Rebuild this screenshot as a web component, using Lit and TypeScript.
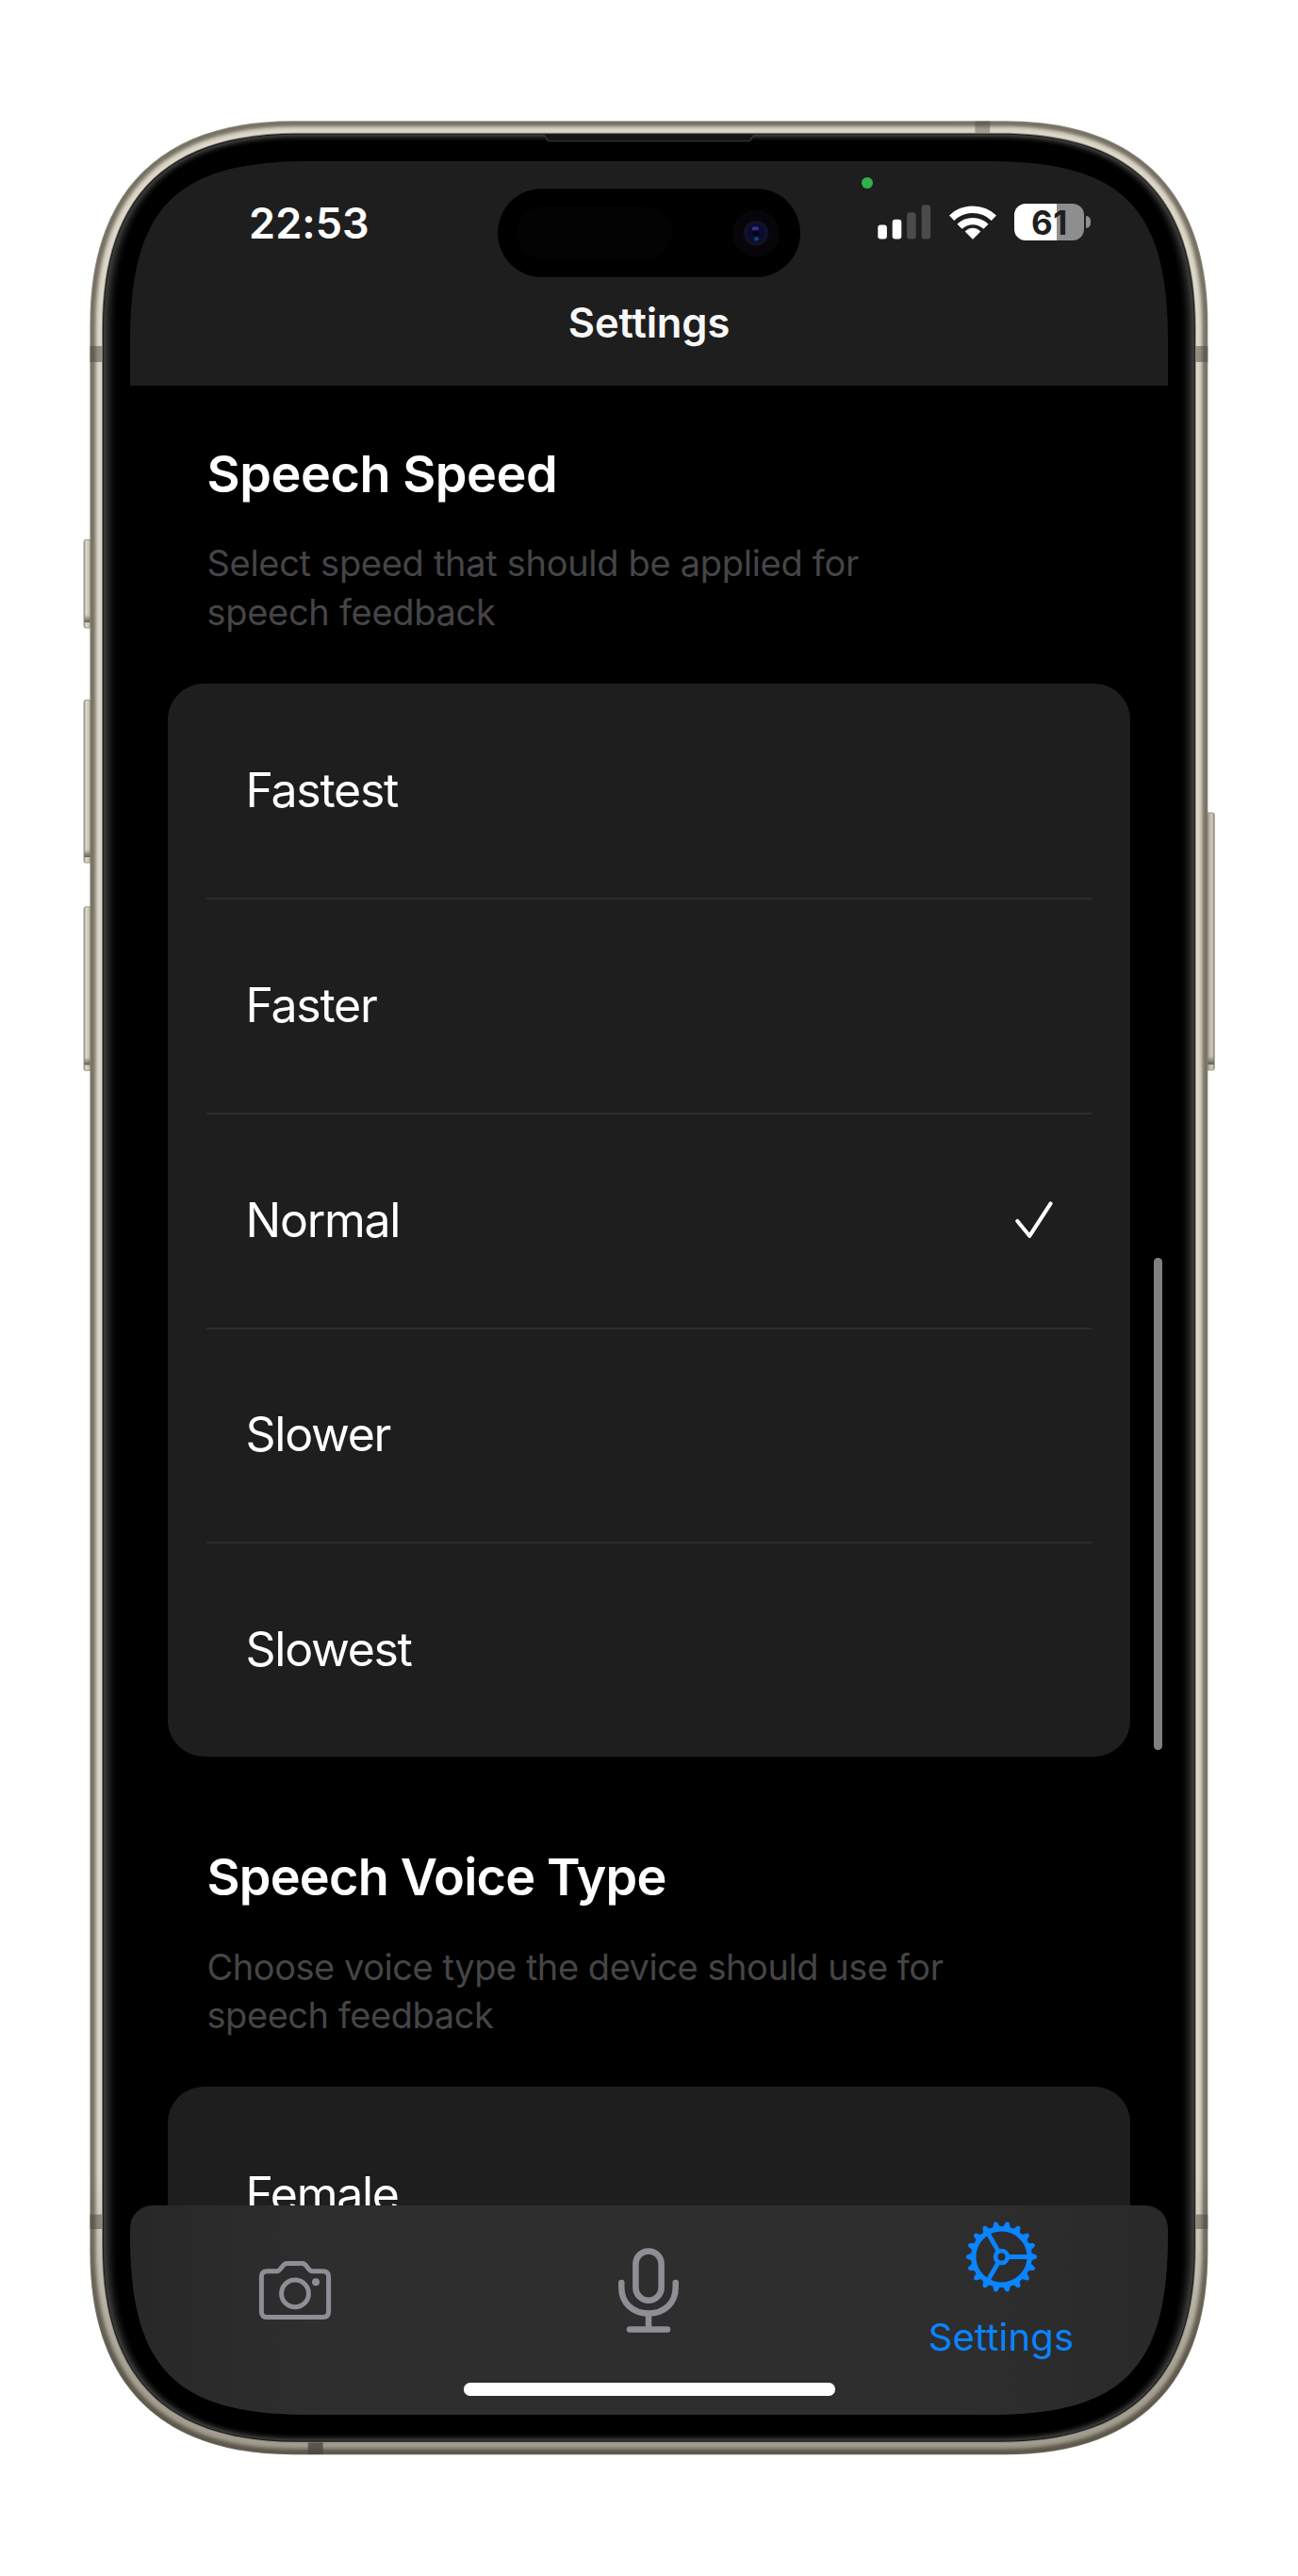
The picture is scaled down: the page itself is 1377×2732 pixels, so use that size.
import { LitElement, html, svg, css, unsafeCSS } from "lit";
import { classMap } from "lit/directives/class-map.js";

/* Continuous-corner rectangle: `e` is how far the corner reaches along each edge, `mid` its inset on the diagonal. */
function squircle(x: number, y: number, w: number, h: number, e: number, mid: number): string {
  const a = (8 * mid - e) / 3;
  const r = x + w;
  const b = y + h;
  return (
    `M${x + e} ${y}H${r - e}C${r - a} ${y} ${r} ${y + a} ${r} ${y + e}` +
    `V${b - e}C${r} ${b - a} ${r - a} ${b} ${r - e} ${b}` +
    `H${x + e}C${x + a} ${b} ${x} ${b - a} ${x} ${b - e}` +
    `V${y + e}C${x} ${y + a} ${x + a} ${y} ${x + e} ${y}Z`
  );
}

const BODY = { x: 95.4, y: 128.2, w: 1186, h: 2475 };

/* The edge glow of the glass is wider on the long sides than on the top and bottom. */
function bodyAt(inset: number): string {
  const v = inset > 15 ? 15 + (inset - 15) * 0.5 : inset;
  return squircle(
    BODY.x + inset,
    BODY.y + v,
    BODY.w - inset * 2,
    BODY.h - v * 2,
    215 - inset * 0.58,
    55 - inset * 0.293
  );
}

/* [inset, colour] from the outer rim to the glass */
const METAL: Array<[number, string]> = [
  [0, "#8d887a"],
  [1, "#757063"],
  [2.5, "#7b7668"],
  [4, "#8c8678"],
  [5.2, "#a39d8e"],
  [6.4, "#bdb7a8"],
  [7.6, "#d0cabc"],
  [9, "#dad5c7"],
  [11, "#ded9cc"],
];
const GLASS: Array<[number, string]> = [
  [12.6, "#8f8878"],
  [13.5, "#1b1a18"],
  [14.6, "#3b3b3b"],
  [16, "#343434"],
  [17.4, "#2b2b2b"],
  [18.8, "#222222"],
  [20.2, "#1a1a1a"],
  [21.8, "#121212"],
  [23.4, "#0b0b0b"],
  [25.2, "#050505"],
  [27.5, "#000000"],
];

const SCREEN_CLIP = squircle(0, 0, 1101, 2390, 190, 42);

const LEFT_KEYS = [
  { y: 572.4, h: 93.6 },
  { y: 742.4, h: 172.6 },
  { y: 961.8, h: 173.6 },
];

class DeviceFrame extends LitElement {
  static styles = css`
    :host {
      display: block;
    }
    .art {
      display: block;
      width: 1377px;
      height: 2732px;
    }
  `;

  render() {
    return html`
      <svg class="art" viewBox="0 0 1377 2732" aria-hidden="true">
        <defs>
          <linearGradient id="key" x1="0" x2="1" y1="0" y2="0">
            <stop offset="0" stop-color="#9a9587" />
            <stop offset="0.25" stop-color="#ddd8cb" />
            <stop offset="0.6" stop-color="#c8c2b4" />
            <stop offset="1" stop-color="#77725f" />
          </linearGradient>
          <linearGradient id="keyR" x1="1" x2="0" y1="0" y2="0">
            <stop offset="0" stop-color="#8a8577" />
            <stop offset="0.25" stop-color="#d2cdc0" />
            <stop offset="0.6" stop-color="#b7b1a3" />
            <stop offset="1" stop-color="#6d685a" />
          </linearGradient>
          <linearGradient id="shade" x1="0" x2="0" y1="0" y2="1">
            <stop offset="0.88" stop-color="#2c261a" stop-opacity="0" />
            <stop offset="0.96" stop-color="#2c261a" stop-opacity="0.3" />
            <stop offset="1" stop-color="#2c261a" stop-opacity="0.34" />
          </linearGradient>
          <linearGradient id="keyEnd" x1="0" x2="0" y1="0" y2="1">
            <stop offset="0" stop-color="#625d50" stop-opacity="0" />
            <stop offset="1" stop-color="#625d50" />
          </linearGradient>
        </defs>
        ${LEFT_KEYS.map(
          (k) => svg`
            <rect x="89" y=${k.y} width="9" height=${k.h} rx="2" fill="url(#key)" stroke="#8d887a" stroke-width="0.8" />
            <rect x="89.6" y=${k.y + k.h - 14} width="7" height="8" fill="url(#keyEnd)" />`
        )}
        <rect x="1279" y="862" width="9.3" height="273" rx="2" fill="url(#keyR)" stroke="#8d887a" stroke-width="0.8" />
        <rect x="1281" y="1120" width="6.8" height="9" fill="url(#keyEnd)" />
        ${METAL.map(([i, c]) => svg`<path d=${bodyAt(i)} fill=${c} />`)}
        <path d=${bodyAt(0)} fill="url(#shade)" />
        <g fill="#4c4341" fill-opacity="0.5">
          <rect x="95.4" y="367" width="14" height="17" />
          <rect x="1267.4" y="367" width="14" height="17" />
          <rect x="95.4" y="2348.6" width="14" height="15.4" />
          <rect x="1267.4" y="2348.6" width="14" height="15.4" />
          <rect x="1034.4" y="128.4" width="15.8" height="14" fill-opacity="0.4" />
          <rect x="326.8" y="2590" width="15.8" height="13" fill-opacity="0.8" />
        </g>
        ${GLASS.map(([i, c]) => svg`<path d=${bodyAt(i)} fill=${c} />`)}
        <path d="M577 142.6H800L796.5 148.6Q795.6 150 793.5 150H583.5Q581.4 150 580.5 148.6Z" fill="#161616" />
        <path d="M577.5 143.2L580.8 148.6Q581.6 149.8 583.5 149.8H793.5Q795.4 149.8 796.2 148.6L799.5 143.2" fill="none" stroke="#3a3a3a" stroke-width="1.1" />
      </svg>
    `;
  }
}
customElements.define("device-frame", DeviceFrame);

class StatusBar extends LitElement {
  static styles = css`
    :host {
      display: block;
    }
    .row {
      display: flex;
      justify-content: space-between;
      align-items: center;
      height: 129px;
      padding: 0 82px 0 126px;
    }
    .time {
      padding-top: 3px;
      font-size: 45px;
      line-height: 54px;
      font-weight: 600;
      letter-spacing: 0.1px;
      color: #fff;
    }
    .icons {
      display: flex;
      align-items: center;
      gap: 19px;
    }
    .icon {
      display: block;
    }
    .battery {
      display: flex;
      align-items: center;
      gap: 2px;
    }
    .cell {
      display: flex;
      justify-content: center;
      align-items: center;
      width: 74px;
      height: 39px;
      border-radius: 12px;
      background: linear-gradient(90deg, #fff 61%, #8e8e8e 61%);
      font-size: 35px;
      line-height: 40px;
      font-weight: 700;
      letter-spacing: 0.6px;
      color: #1f1f1f;
    }
    .nub {
      width: 4.6px;
      height: 12.4px;
      border-radius: 0 5px 5px 0;
      background: #8e8e8e;
    }
  `;

  render() {
    return html`
      <div class="row">
        <div class="time">22:53</div>
        <div class="icons">
          <svg class="icon" width="57" height="37" viewBox="0 0 57 37">
            <rect x="0.3" y="21.6" width="9.6" height="14.9" rx="3" fill="#fff" />
            <rect x="15.7" y="15.8" width="9.6" height="20.7" rx="3" fill="#fff" />
            <rect x="31.1" y="8.2" width="9.6" height="28.3" rx="3" fill="#4b4b4b" />
            <rect x="46.6" y="0.2" width="9.6" height="36.3" rx="3" fill="#4b4b4b" />
          </svg>
          <svg class="icon" width="50" height="37" viewBox="0 0 50 37">
            <g fill="none" stroke="#fff">
              <path d="M2.6 14.2A32.4 32.4 0 0 1 47.4 14.2" stroke-width="7.6" />
              <path d="M11 23.3A20 20 0 0 1 39 23.3" stroke-width="7.2" />
            </g>
            <path d="M25 36.6L17 28.5Q20.4 25 25 25T33 28.5Z" fill="#fff" stroke="#fff" stroke-width="0.6" stroke-linejoin="round" />
          </svg>
          <div class="battery">
            <div class="cell">61</div>
            <div class="nub"></div>
          </div>
        </div>
      </div>
    `;
  }
}
customElements.define("status-bar", StatusBar);

interface Section {
  title: string;
  hint: string;
  options: string[];
  selected?: string;
  tight?: boolean;
}

class SettingsSection extends LitElement {
  static properties = { section: { attribute: false } };
  declare section: Section;

  static styles = css`
    :host {
      display: block;
    }
    .head {
      display: flex;
      flex-direction: column;
      gap: 39.8px;
      padding: 0 81.5px;
    }
    .title {
      margin: 0;
      font-size: 54px;
      line-height: 60px;
      font-weight: 600;
      letter-spacing: -0.45px;
      color: #fff;
      white-space: nowrap;
    }
    .hint {
      margin: 0;
      max-width: 800px;
      font-size: 38px;
      line-height: 51.7px;
      letter-spacing: -0.3px;
      color: #454547;
    }
    .tight .title {
      letter-spacing: -0.8px;
    }
    .tight .hint {
      letter-spacing: -0.45px;
    }
    .card {
      margin: 48.8px 40px 0 40.3px;
      border-radius: 38px;
      background: #1e1e1e;
    }
    .option {
      display: flex;
      justify-content: space-between;
      align-items: center;
      box-sizing: border-box;
      height: 227.7px;
      margin: 0 41px;
      padding: 0 41px 0 41.3px;
      font-size: 50px;
      line-height: 60px;
      letter-spacing: -1.3px;
      color: #fff;
    }
    .option + .option {
      border-top: 2px solid #2c2c2d;
      padding-bottom: 2px;
    }
    .tick {
      display: block;
    }
  `;

  render() {
    const s = this.section;
    return html`
      <div class=${classMap({ head: true, tight: !!s.tight })}>
        <h2 class="title">${s.title}</h2>
        <p class="hint">${s.hint}</p>
      </div>
      <div class="card">
        ${s.options.map(
          (o) => html`
            <div class="option">
              <span>${o}</span>
              ${o === s.selected
                ? html`<svg class="tick" width="40" height="40" viewBox="0 0 40 40">
                    <path d="M2.3 21L15.2 36.8L37.6 2.4" fill="none" stroke="#fff" stroke-width="4.1" stroke-linecap="round" stroke-linejoin="round" />
                  </svg>`
                : null}
            </div>
          `
        )}
      </div>
    `;
  }
}
customElements.define("settings-section", SettingsSection);

class TabBar extends LitElement {
  static styles = css`
    :host {
      display: block;
    }
    .bar {
      display: flex;
      justify-content: space-between;
      box-sizing: border-box;
      height: 222px;
      padding: 0 102px 0 100px;
      border-radius: 24px 24px 0 0;
      background: linear-gradient(90deg, #282828, #2e2e2e 18%, #2e2e2e 80%, #292929);
      color: #8f8e94;
    }
    .tab {
      display: flex;
      flex-direction: column;
      align-items: center;
      justify-content: center;
      width: 150px;
      height: 180px;
    }
    .tab.active {
      justify-content: flex-start;
      gap: 22.6px;
      box-sizing: border-box;
      padding-top: 16px;
      color: #0a84ff;
    }
    .icon {
      display: block;
      flex: none;
    }
    .label {
      font-size: 40px;
      line-height: 48px;
      letter-spacing: 0.2px;
      white-space: nowrap;
    }
  `;

  render() {
    const teeth = Array.from({ length: 18 }, (_, i) => i * 20);
    return html`
      <nav class="bar">
        <div class="tab">
          <svg class="icon" width="78" height="64" viewBox="0 0 78 64" fill="none" stroke="currentColor" stroke-width="5">
            <path d="M8.5 11.8H19.5C24.5 11.8 25 3.6 30.5 3.6H46.5C52 3.6 52.5 11.8 57.5 11.8H68.5Q74.6 11.8 74.6 17.8V54.6Q74.6 60.6 68.5 60.6H9.5Q3.4 60.6 3.4 54.6V17.8Q3.4 11.8 9.5 11.8Z" />
            <circle cx="39" cy="35.4" r="14.4" />
            <circle cx="61" cy="23.2" r="4" fill="currentColor" stroke="none" />
          </svg>
        </div>
        <div class="tab">
          <svg class="icon" width="66" height="90" viewBox="0 0 66 90" fill="none" stroke="currentColor" stroke-width="6.5" stroke-linecap="round">
            <rect x="19.4" y="3.4" width="27.2" height="52.4" rx="13.6" />
            <path d="M4.3 37V42C4.3 58.5 16 69.5 33 69.5S61.7 58.5 61.7 42V37" />
            <path d="M33 70V85" stroke-linecap="butt" />
            <path d="M13 86.4H53" />
          </svg>
        </div>
        <div class="tab active">
          <svg class="icon" width="77" height="77" viewBox="-38.5 -38.5 77 77" fill="none" stroke="currentColor">
            <circle r="29.7" stroke-width="5.4" />
            <circle r="6.4" stroke-width="4.8" />
            ${[0, 120, 240].map((a) => svg`<path d="M8 0H29" stroke-width="4.8" transform=${`rotate(${a})`} />`)}
            ${teeth.map(
              (a) => svg`<path d="M30.5 -4.4L36.6 -2Q38.6 0 36.6 2L30.5 4.4Z" fill="currentColor" stroke="none" transform=${`rotate(${a})`} />`
            )}
          </svg>
          <span class="label">Settings</span>
        </div>
      </nav>
    `;
  }
}
customElements.define("tab-bar", TabBar);

class AppRoot extends LitElement {
  static styles = css`
    :host {
      display: block;
      width: 1377px;
      height: 2732px;
      background: #fff;
      font-family: Inter, "Liberation Sans", sans-serif;
    }
    .stage {
      position: relative;
      box-sizing: border-box;
      width: 1377px;
      height: 2732px;
      padding: 171px 138px;
      overflow: hidden;
    }
    .frame {
      position: absolute;
      inset: 0;
    }
    .screen {
      position: relative;
      display: flex;
      flex-direction: column;
      width: 1101px;
      height: 2390px;
      background: #000;
      clip-path: path("${unsafeCSS(SCREEN_CLIP)}");
    }
    .header {
      flex: none;
      height: 238px;
      background: #1e1e1e;
    }
    .heading {
      margin: 0;
      padding-top: 15px;
      font-size: 43.5px;
      line-height: 54px;
      font-weight: 600;
      letter-spacing: -0.15px;
      text-align: center;
      color: #f7f7f7;
    }
    .scroll {
      display: flex;
      flex-direction: column;
      flex: 1;
      gap: 97.8px;
      min-height: 0;
      padding-top: 63.5px;
      overflow: hidden;
    }
    .section {
      flex: none;
    }
    .tabs {
      flex: none;
      background: linear-gradient(90deg, transparent 40px, #1c1c1c 40px, #1c1c1c 1061px, transparent 1061px);
    }
    .island {
      position: absolute;
      left: 390px;
      top: 28.6px;
      width: 321px;
      height: 94px;
      border-radius: 47px;
      background: #000;
    }
    .island-art {
      display: block;
    }
    .dot {
      position: absolute;
      left: 776px;
      top: 17px;
      width: 12px;
      height: 12px;
      border-radius: 50%;
      background: #2fb14c;
    }
    .scrollbar {
      position: absolute;
      left: 1086px;
      top: 1162.6px;
      width: 8.8px;
      height: 522px;
      border-radius: 4.4px;
      background: #808080;
    }
    .home {
      position: absolute;
      left: 353.6px;
      top: 2356.4px;
      width: 394.4px;
      height: 13.2px;
      border-radius: 6.6px;
      background: #fff;
    }
  `;

  private sections: Section[] = [
    {
      title: "Speech Speed",
      hint: "Select speed that should be applied for speech feedback",
      options: ["Fastest", "Faster", "Normal", "Slower", "Slowest"],
      selected: "Normal",
    },
    {
      title: "Speech Voice Type",
      hint: "Choose voice type the device should use for speech feedback",
      options: ["Female"],
      tight: true,
    },
  ];

  render() {
    return html`
      <div class="stage">
        <device-frame class="frame"></device-frame>
        <main class="screen">
          <header class="header">
            <status-bar></status-bar>
            <h1 class="heading">Settings</h1>
          </header>
          <div class="scroll">
            ${this.sections.map((s) => html`<settings-section class="section" .section=${s}></settings-section>`)}
          </div>
          <tab-bar class="tabs"></tab-bar>
          <div class="island">
            <svg class="island-art" width="321" height="94" viewBox="0 0 321 94">
              <defs>
                <radialGradient id="lens">
                  <stop offset="0" stop-color="#0a0a34" />
                  <stop offset="0.65" stop-color="#0b0b36" />
                  <stop offset="0.85" stop-color="#141426" />
                  <stop offset="1" stop-color="#0c0c14" />
                </radialGradient>
              </defs>
              <rect x="20" y="19" width="165" height="56" rx="28" fill="#030303" />
              <circle cx="274" cy="47.4" r="25" fill="#08050a" />
              <circle cx="274" cy="47.4" r="13.5" fill="url(#lens)" />
              <ellipse cx="273.4" cy="42.6" rx="3.6" ry="2.4" fill="#34347c" />
              <circle cx="274" cy="47.6" r="3.4" fill="#04041a" />
              <circle cx="274.4" cy="53.4" r="2.4" fill="#124a58" />
            </svg>
          </div>
          <div class="dot"></div>
          <div class="scrollbar"></div>
          <div class="home"></div>
        </main>
      </div>
    `;
  }
}
customElements.define("app-root", AppRoot);
